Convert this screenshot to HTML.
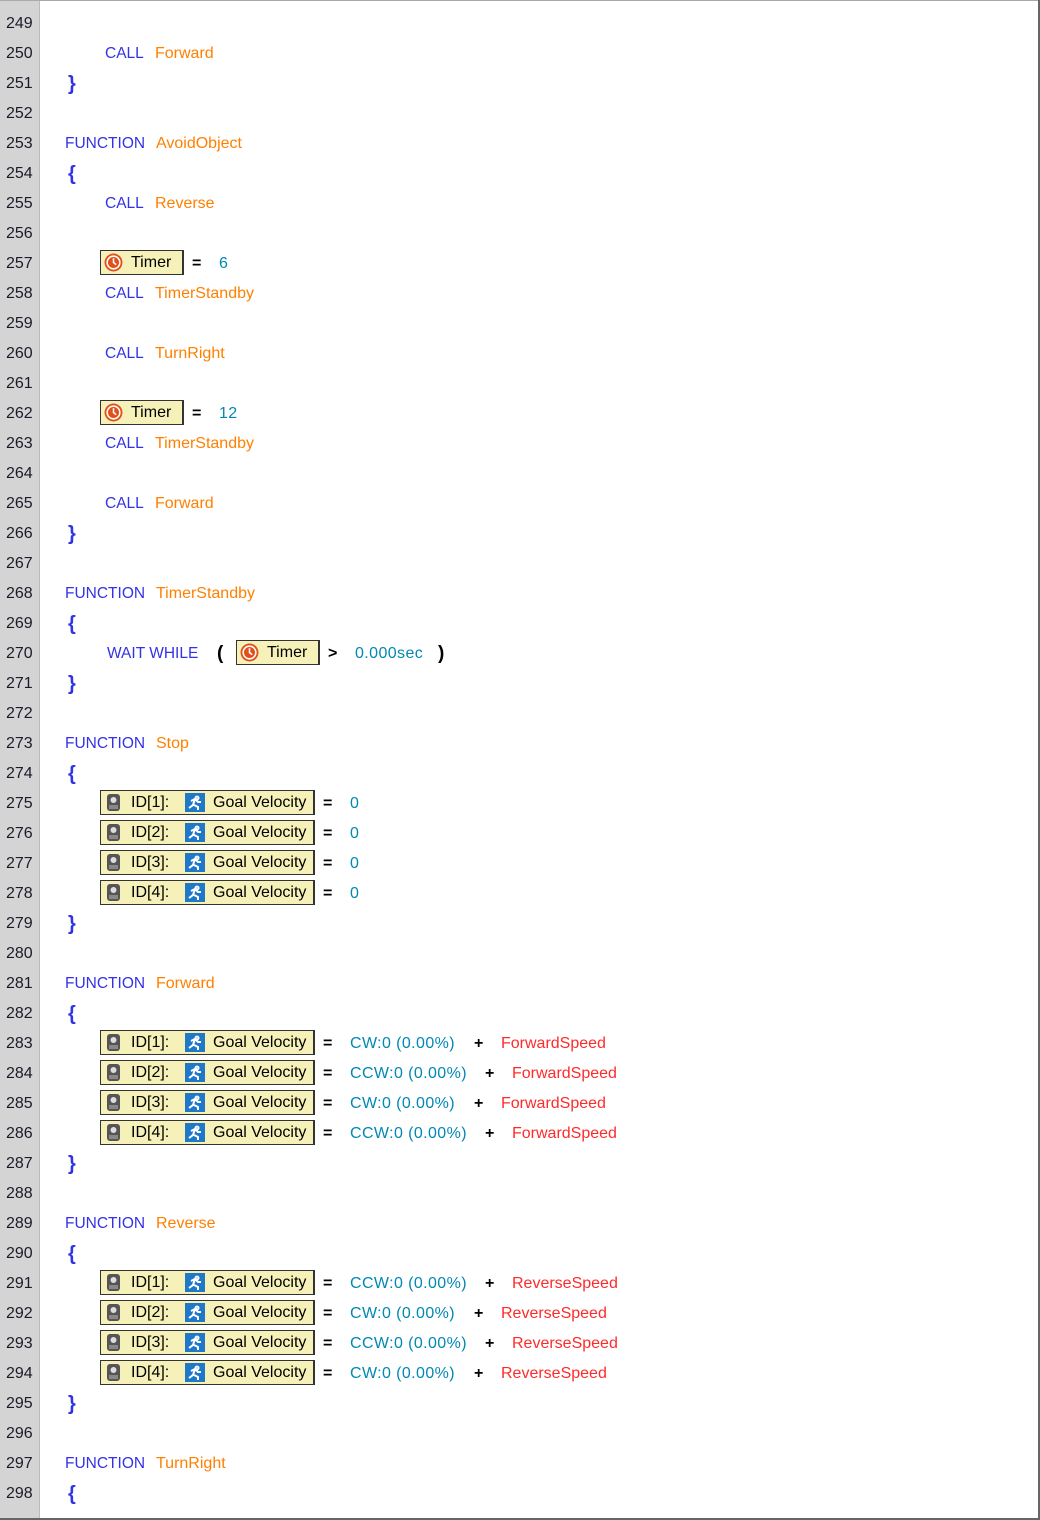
<!DOCTYPE html>
<html><head><meta charset="utf-8"><style>
body{margin:0;width:1040px;height:1520px;overflow:hidden;background:#fff;font-family:"Liberation Sans","Noto Sans CJK KR",sans-serif;font-size:16px;position:relative}
#g{position:absolute;left:0;top:0;width:39px;height:1520px;background:#d4d4d4;border-right:1px solid #bbb}
#rb{position:absolute;left:1038px;top:0;width:2px;height:1520px;background:#666}
#bb{position:absolute;left:0;top:1518px;width:1040px;height:2px;background:#666}
#tb{position:absolute;left:0;top:0;width:1040px;height:1px;background:#aaa}
.l{position:absolute;left:0;height:30px;width:1000px;line-height:30px;margin-top:2px}
.l span,.l div{position:absolute;white-space:nowrap}
.n{left:6px;color:#1a1a2a}
.k{color:#3232e6;font-size:15.5px}
.f{color:#ff8000}
.v{color:#0088b4;letter-spacing:0.4px}
.r{color:#ff2a2a}
.o{color:#000;font-weight:bold}
.br{color:#3232e6;font-weight:bold;font-size:20px;left:68px}
.box{top:1px;height:25px;background:#f6f1b8;border:1px solid #333;border-right:2px solid #333;box-sizing:border-box;line-height:24px;color:#000}
.box svg{position:absolute}
</style></head><body>
<div id="g"></div><div id="tb"></div>
<div class="l" style="top:7px"><span class="n">249</span></div>
<div class="l" style="top:37px"><span class="n">250</span><span class="k" style="left:105px">CALL</span><span class="f" style="left:155px">Forward</span></div>
<div class="l" style="top:67px"><span class="n">251</span><span class="br">}</span></div>
<div class="l" style="top:97px"><span class="n">252</span></div>
<div class="l" style="top:127px"><span class="n">253</span><span class="k" style="left:65px">FUNCTION</span><span class="f" style="left:156px">AvoidObject</span></div>
<div class="l" style="top:157px"><span class="n">254</span><span class="br">{</span></div>
<div class="l" style="top:187px"><span class="n">255</span><span class="k" style="left:105px">CALL</span><span class="f" style="left:155px">Reverse</span></div>
<div class="l" style="top:217px"><span class="n">256</span></div>
<div class="l" style="top:247px"><span class="n">257</span><div class="box" style="left:100px;width:84px"><svg style="left:3px;top:2px" width="19" height="19" viewBox="0 0 18 18"><circle cx="9" cy="9" r="8.5" fill="#e2501a"/><circle cx="9" cy="9" r="6" fill="none" stroke="#fff" stroke-width="1.5"/><path d="M9 5V9L11.5 11" stroke="#fff" stroke-width="1.5" fill="none"/></svg><span style="left:30px">Timer</span></div><span class="o" style="left:192px">=</span><span class="v" style="left:219px">6</span></div>
<div class="l" style="top:277px"><span class="n">258</span><span class="k" style="left:105px">CALL</span><span class="f" style="left:155px">TimerStandby</span></div>
<div class="l" style="top:307px"><span class="n">259</span></div>
<div class="l" style="top:337px"><span class="n">260</span><span class="k" style="left:105px">CALL</span><span class="f" style="left:155px">TurnRight</span></div>
<div class="l" style="top:367px"><span class="n">261</span></div>
<div class="l" style="top:397px"><span class="n">262</span><div class="box" style="left:100px;width:84px"><svg style="left:3px;top:2px" width="19" height="19" viewBox="0 0 18 18"><circle cx="9" cy="9" r="8.5" fill="#e2501a"/><circle cx="9" cy="9" r="6" fill="none" stroke="#fff" stroke-width="1.5"/><path d="M9 5V9L11.5 11" stroke="#fff" stroke-width="1.5" fill="none"/></svg><span style="left:30px">Timer</span></div><span class="o" style="left:192px">=</span><span class="v" style="left:219px">12</span></div>
<div class="l" style="top:427px"><span class="n">263</span><span class="k" style="left:105px">CALL</span><span class="f" style="left:155px">TimerStandby</span></div>
<div class="l" style="top:457px"><span class="n">264</span></div>
<div class="l" style="top:487px"><span class="n">265</span><span class="k" style="left:105px">CALL</span><span class="f" style="left:155px">Forward</span></div>
<div class="l" style="top:517px"><span class="n">266</span><span class="br">}</span></div>
<div class="l" style="top:547px"><span class="n">267</span></div>
<div class="l" style="top:577px"><span class="n">268</span><span class="k" style="left:65px">FUNCTION</span><span class="f" style="left:156px">TimerStandby</span></div>
<div class="l" style="top:607px"><span class="n">269</span><span class="br">{</span></div>
<div class="l" style="top:637px"><span class="n">270</span><span class="k" style="left:107px">WAIT WHILE</span><span class="o" style="left:217px;font-size:19px">(</span><div class="box" style="left:236px;width:84px"><svg style="left:3px;top:2px" width="19" height="19" viewBox="0 0 18 18"><circle cx="9" cy="9" r="8.5" fill="#e2501a"/><circle cx="9" cy="9" r="6" fill="none" stroke="#fff" stroke-width="1.5"/><path d="M9 5V9L11.5 11" stroke="#fff" stroke-width="1.5" fill="none"/></svg><span style="left:30px">Timer</span></div><span class="o" style="left:328px">&gt;</span><span class="v" style="left:355px">0.000sec</span><span class="o" style="left:438px;font-size:19px">)</span></div>
<div class="l" style="top:667px"><span class="n">271</span><span class="br">}</span></div>
<div class="l" style="top:697px"><span class="n">272</span></div>
<div class="l" style="top:727px"><span class="n">273</span><span class="k" style="left:65px">FUNCTION</span><span class="f" style="left:156px">Stop</span></div>
<div class="l" style="top:757px"><span class="n">274</span><span class="br">{</span></div>

<div class="l" style="top:787px"><span class="n">275</span><div class="box" style="left:100px;width:215px"><svg style="left:5px;top:2px" width="16" height="19" viewBox="0 0 16 19"><rect x="1" y="1" width="13" height="17" rx="3" fill="#555"/><circle cx="7.5" cy="7" r="3" fill="#ddd"/><rect x="3" y="12" width="9" height="4" fill="#888"/></svg><span style="left:30px">ID[1]:</span><svg style="left:84px;top:2px" width="20" height="19" viewBox="0 0 20 19"><rect width="20" height="19" fill="#1f78c8"/><path d="M12 3.5a1.5 1.5 0 1 0 .1 0M6 8l4-2 3 3 3 0M10 6l-2 6-4 3M9 12l4 2 0 3" stroke="#fff" stroke-width="2" fill="none"/></svg><span style="left:112px">Goal Velocity</span></div><span class="o" style="left:323px">=</span><span class="v" style="left:350px">0</span></div>
<div class="l" style="top:817px"><span class="n">276</span><div class="box" style="left:100px;width:215px"><svg style="left:5px;top:2px" width="16" height="19" viewBox="0 0 16 19"><rect x="1" y="1" width="13" height="17" rx="3" fill="#555"/><circle cx="7.5" cy="7" r="3" fill="#ddd"/><rect x="3" y="12" width="9" height="4" fill="#888"/></svg><span style="left:30px">ID[2]:</span><svg style="left:84px;top:2px" width="20" height="19" viewBox="0 0 20 19"><rect width="20" height="19" fill="#1f78c8"/><path d="M12 3.5a1.5 1.5 0 1 0 .1 0M6 8l4-2 3 3 3 0M10 6l-2 6-4 3M9 12l4 2 0 3" stroke="#fff" stroke-width="2" fill="none"/></svg><span style="left:112px">Goal Velocity</span></div><span class="o" style="left:323px">=</span><span class="v" style="left:350px">0</span></div>
<div class="l" style="top:847px"><span class="n">277</span><div class="box" style="left:100px;width:215px"><svg style="left:5px;top:2px" width="16" height="19" viewBox="0 0 16 19"><rect x="1" y="1" width="13" height="17" rx="3" fill="#555"/><circle cx="7.5" cy="7" r="3" fill="#ddd"/><rect x="3" y="12" width="9" height="4" fill="#888"/></svg><span style="left:30px">ID[3]:</span><svg style="left:84px;top:2px" width="20" height="19" viewBox="0 0 20 19"><rect width="20" height="19" fill="#1f78c8"/><path d="M12 3.5a1.5 1.5 0 1 0 .1 0M6 8l4-2 3 3 3 0M10 6l-2 6-4 3M9 12l4 2 0 3" stroke="#fff" stroke-width="2" fill="none"/></svg><span style="left:112px">Goal Velocity</span></div><span class="o" style="left:323px">=</span><span class="v" style="left:350px">0</span></div>
<div class="l" style="top:877px"><span class="n">278</span><div class="box" style="left:100px;width:215px"><svg style="left:5px;top:2px" width="16" height="19" viewBox="0 0 16 19"><rect x="1" y="1" width="13" height="17" rx="3" fill="#555"/><circle cx="7.5" cy="7" r="3" fill="#ddd"/><rect x="3" y="12" width="9" height="4" fill="#888"/></svg><span style="left:30px">ID[4]:</span><svg style="left:84px;top:2px" width="20" height="19" viewBox="0 0 20 19"><rect width="20" height="19" fill="#1f78c8"/><path d="M12 3.5a1.5 1.5 0 1 0 .1 0M6 8l4-2 3 3 3 0M10 6l-2 6-4 3M9 12l4 2 0 3" stroke="#fff" stroke-width="2" fill="none"/></svg><span style="left:112px">Goal Velocity</span></div><span class="o" style="left:323px">=</span><span class="v" style="left:350px">0</span></div>
<div class="l" style="top:907px"><span class="n">279</span><span class="br">}</span></div>
<div class="l" style="top:937px"><span class="n">280</span></div>
<div class="l" style="top:967px"><span class="n">281</span><span class="k" style="left:65px">FUNCTION</span><span class="f" style="left:156px">Forward</span></div>
<div class="l" style="top:997px"><span class="n">282</span><span class="br">{</span></div>

<div class="l" style="top:1027px"><span class="n">283</span><div class="box" style="left:100px;width:215px"><svg style="left:5px;top:2px" width="16" height="19" viewBox="0 0 16 19"><rect x="1" y="1" width="13" height="17" rx="3" fill="#555"/><circle cx="7.5" cy="7" r="3" fill="#ddd"/><rect x="3" y="12" width="9" height="4" fill="#888"/></svg><span style="left:30px">ID[1]:</span><svg style="left:84px;top:2px" width="20" height="19" viewBox="0 0 20 19"><rect width="20" height="19" fill="#1f78c8"/><path d="M12 3.5a1.5 1.5 0 1 0 .1 0M6 8l4-2 3 3 3 0M10 6l-2 6-4 3M9 12l4 2 0 3" stroke="#fff" stroke-width="2" fill="none"/></svg><span style="left:112px">Goal Velocity</span></div><span class="o" style="left:323px">=</span><span class="v" style="left:350px">CW:0 (0.00%)</span><span class="o" style="left:474px">+</span><span class="r" style="left:501px">ForwardSpeed</span></div>
<div class="l" style="top:1057px"><span class="n">284</span><div class="box" style="left:100px;width:215px"><svg style="left:5px;top:2px" width="16" height="19" viewBox="0 0 16 19"><rect x="1" y="1" width="13" height="17" rx="3" fill="#555"/><circle cx="7.5" cy="7" r="3" fill="#ddd"/><rect x="3" y="12" width="9" height="4" fill="#888"/></svg><span style="left:30px">ID[2]:</span><svg style="left:84px;top:2px" width="20" height="19" viewBox="0 0 20 19"><rect width="20" height="19" fill="#1f78c8"/><path d="M12 3.5a1.5 1.5 0 1 0 .1 0M6 8l4-2 3 3 3 0M10 6l-2 6-4 3M9 12l4 2 0 3" stroke="#fff" stroke-width="2" fill="none"/></svg><span style="left:112px">Goal Velocity</span></div><span class="o" style="left:323px">=</span><span class="v" style="left:350px">CCW:0 (0.00%)</span><span class="o" style="left:485px">+</span><span class="r" style="left:512px">ForwardSpeed</span></div>
<div class="l" style="top:1087px"><span class="n">285</span><div class="box" style="left:100px;width:215px"><svg style="left:5px;top:2px" width="16" height="19" viewBox="0 0 16 19"><rect x="1" y="1" width="13" height="17" rx="3" fill="#555"/><circle cx="7.5" cy="7" r="3" fill="#ddd"/><rect x="3" y="12" width="9" height="4" fill="#888"/></svg><span style="left:30px">ID[3]:</span><svg style="left:84px;top:2px" width="20" height="19" viewBox="0 0 20 19"><rect width="20" height="19" fill="#1f78c8"/><path d="M12 3.5a1.5 1.5 0 1 0 .1 0M6 8l4-2 3 3 3 0M10 6l-2 6-4 3M9 12l4 2 0 3" stroke="#fff" stroke-width="2" fill="none"/></svg><span style="left:112px">Goal Velocity</span></div><span class="o" style="left:323px">=</span><span class="v" style="left:350px">CW:0 (0.00%)</span><span class="o" style="left:474px">+</span><span class="r" style="left:501px">ForwardSpeed</span></div>
<div class="l" style="top:1117px"><span class="n">286</span><div class="box" style="left:100px;width:215px"><svg style="left:5px;top:2px" width="16" height="19" viewBox="0 0 16 19"><rect x="1" y="1" width="13" height="17" rx="3" fill="#555"/><circle cx="7.5" cy="7" r="3" fill="#ddd"/><rect x="3" y="12" width="9" height="4" fill="#888"/></svg><span style="left:30px">ID[4]:</span><svg style="left:84px;top:2px" width="20" height="19" viewBox="0 0 20 19"><rect width="20" height="19" fill="#1f78c8"/><path d="M12 3.5a1.5 1.5 0 1 0 .1 0M6 8l4-2 3 3 3 0M10 6l-2 6-4 3M9 12l4 2 0 3" stroke="#fff" stroke-width="2" fill="none"/></svg><span style="left:112px">Goal Velocity</span></div><span class="o" style="left:323px">=</span><span class="v" style="left:350px">CCW:0 (0.00%)</span><span class="o" style="left:485px">+</span><span class="r" style="left:512px">ForwardSpeed</span></div>
<div class="l" style="top:1147px"><span class="n">287</span><span class="br">}</span></div>
<div class="l" style="top:1177px"><span class="n">288</span></div>
<div class="l" style="top:1207px"><span class="n">289</span><span class="k" style="left:65px">FUNCTION</span><span class="f" style="left:156px">Reverse</span></div>
<div class="l" style="top:1237px"><span class="n">290</span><span class="br">{</span></div>

<div class="l" style="top:1267px"><span class="n">291</span><div class="box" style="left:100px;width:215px"><svg style="left:5px;top:2px" width="16" height="19" viewBox="0 0 16 19"><rect x="1" y="1" width="13" height="17" rx="3" fill="#555"/><circle cx="7.5" cy="7" r="3" fill="#ddd"/><rect x="3" y="12" width="9" height="4" fill="#888"/></svg><span style="left:30px">ID[1]:</span><svg style="left:84px;top:2px" width="20" height="19" viewBox="0 0 20 19"><rect width="20" height="19" fill="#1f78c8"/><path d="M12 3.5a1.5 1.5 0 1 0 .1 0M6 8l4-2 3 3 3 0M10 6l-2 6-4 3M9 12l4 2 0 3" stroke="#fff" stroke-width="2" fill="none"/></svg><span style="left:112px">Goal Velocity</span></div><span class="o" style="left:323px">=</span><span class="v" style="left:350px">CCW:0 (0.00%)</span><span class="o" style="left:485px">+</span><span class="r" style="left:512px">ReverseSpeed</span></div>
<div class="l" style="top:1297px"><span class="n">292</span><div class="box" style="left:100px;width:215px"><svg style="left:5px;top:2px" width="16" height="19" viewBox="0 0 16 19"><rect x="1" y="1" width="13" height="17" rx="3" fill="#555"/><circle cx="7.5" cy="7" r="3" fill="#ddd"/><rect x="3" y="12" width="9" height="4" fill="#888"/></svg><span style="left:30px">ID[2]:</span><svg style="left:84px;top:2px" width="20" height="19" viewBox="0 0 20 19"><rect width="20" height="19" fill="#1f78c8"/><path d="M12 3.5a1.5 1.5 0 1 0 .1 0M6 8l4-2 3 3 3 0M10 6l-2 6-4 3M9 12l4 2 0 3" stroke="#fff" stroke-width="2" fill="none"/></svg><span style="left:112px">Goal Velocity</span></div><span class="o" style="left:323px">=</span><span class="v" style="left:350px">CW:0 (0.00%)</span><span class="o" style="left:474px">+</span><span class="r" style="left:501px">ReverseSpeed</span></div>
<div class="l" style="top:1327px"><span class="n">293</span><div class="box" style="left:100px;width:215px"><svg style="left:5px;top:2px" width="16" height="19" viewBox="0 0 16 19"><rect x="1" y="1" width="13" height="17" rx="3" fill="#555"/><circle cx="7.5" cy="7" r="3" fill="#ddd"/><rect x="3" y="12" width="9" height="4" fill="#888"/></svg><span style="left:30px">ID[3]:</span><svg style="left:84px;top:2px" width="20" height="19" viewBox="0 0 20 19"><rect width="20" height="19" fill="#1f78c8"/><path d="M12 3.5a1.5 1.5 0 1 0 .1 0M6 8l4-2 3 3 3 0M10 6l-2 6-4 3M9 12l4 2 0 3" stroke="#fff" stroke-width="2" fill="none"/></svg><span style="left:112px">Goal Velocity</span></div><span class="o" style="left:323px">=</span><span class="v" style="left:350px">CCW:0 (0.00%)</span><span class="o" style="left:485px">+</span><span class="r" style="left:512px">ReverseSpeed</span></div>
<div class="l" style="top:1357px"><span class="n">294</span><div class="box" style="left:100px;width:215px"><svg style="left:5px;top:2px" width="16" height="19" viewBox="0 0 16 19"><rect x="1" y="1" width="13" height="17" rx="3" fill="#555"/><circle cx="7.5" cy="7" r="3" fill="#ddd"/><rect x="3" y="12" width="9" height="4" fill="#888"/></svg><span style="left:30px">ID[4]:</span><svg style="left:84px;top:2px" width="20" height="19" viewBox="0 0 20 19"><rect width="20" height="19" fill="#1f78c8"/><path d="M12 3.5a1.5 1.5 0 1 0 .1 0M6 8l4-2 3 3 3 0M10 6l-2 6-4 3M9 12l4 2 0 3" stroke="#fff" stroke-width="2" fill="none"/></svg><span style="left:112px">Goal Velocity</span></div><span class="o" style="left:323px">=</span><span class="v" style="left:350px">CW:0 (0.00%)</span><span class="o" style="left:474px">+</span><span class="r" style="left:501px">ReverseSpeed</span></div>
<div class="l" style="top:1387px"><span class="n">295</span><span class="br">}</span></div>
<div class="l" style="top:1417px"><span class="n">296</span></div>
<div class="l" style="top:1447px"><span class="n">297</span><span class="k" style="left:65px">FUNCTION</span><span class="f" style="left:156px">TurnRight</span></div>
<div class="l" style="top:1477px"><span class="n">298</span><span class="br">{</span></div>
<div id="rb"></div><div id="bb"></div>
</body></html>
